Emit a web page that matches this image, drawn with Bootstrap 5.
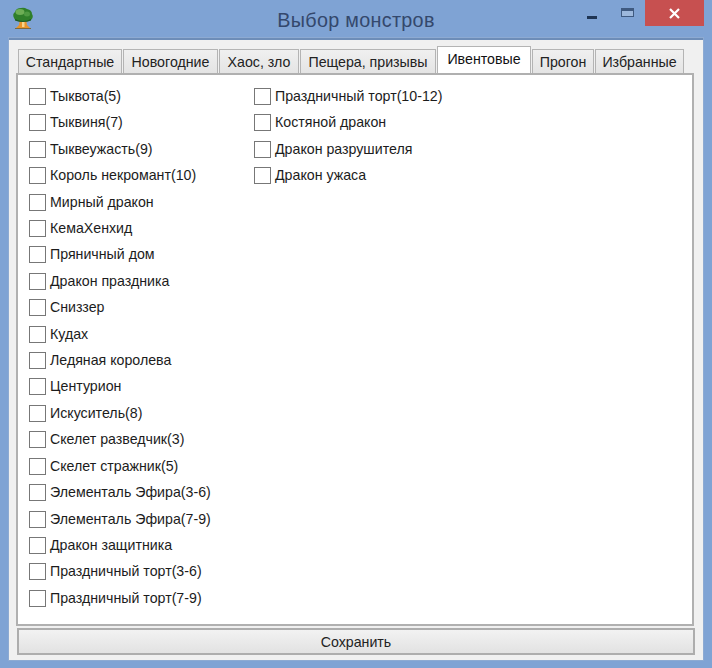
<!DOCTYPE html>
<html lang="ru"><head><meta charset="utf-8"><title>Выбор монстров</title>
<link href="https://cdn.jsdelivr.net/npm/bootstrap@5.3.0/dist/css/bootstrap.min.css" rel="stylesheet">
<style>
html,body{height:100%;}
body{background:#7fa3d4;font-family:"Liberation Sans",sans-serif;font-size:14.2px;color:#1c1c1c;overflow:hidden;}
.win{width:712px;height:668px;padding:0 9px 8px 9px;}
.titlebar{height:38px;}
.tree{margin:7px 0 0 3px;}
.wintitle{font-size:19.8px;color:#34486c;letter-spacing:.3px;left:0;right:0;top:8px;text-align:center;line-height:24px;}
.ctrl-min{width:10px;height:3px;background:#1f3554;margin:16px 24px 0 0;}
.ctrl-max{width:13px;height:9px;border:1.5px solid #3f5a80;border-top-width:3px;background:#9db8dc;margin:8px 11px 0 0;}
.ctrl-close{width:59px;height:26px;background:#c75050;color:#fff;margin-right:-1px;}
.client{height:622px;background:#f0f0f0;border-top:2px solid #6d8db8;padding:6px 0 0 7px;box-shadow:0 0 0 1px #8daad2;}
.tabbar{height:27px;padding-left:2px;gap:1px;border:0;flex-wrap:nowrap;align-items:flex-end;}
.tabbar .nav-link{height:24px;padding:0;margin:0;border:1.5px solid #b4b4b4;border-bottom:0;border-radius:0;background:linear-gradient(#f0f0f0,#e4e4e4);color:#222;font-size:14.2px;line-height:24px;text-align:center;white-space:nowrap;}
.tabbar .nav-link.active{height:27px;background:#fff;border-color:#b4b4b4;color:#111;font-weight:500;line-height:25px;margin-bottom:0;}
.panel{height:553px;width:678px;background:#fff;border:2px solid #b0b0b0;padding:13px 0 0 11px;}
.col-a{width:225px;}
.pick{height:26.42px;margin:0;gap:4px;white-space:nowrap;}
.pick .form-check-input{width:17px;height:17px;margin:0;flex:none;border:1px solid #777;border-radius:0;background-color:#fff;}
.pick span{line-height:17px;}
.savebtn{display:block;width:678px;height:27px;margin:2px 0 0 1px;padding:0;background:linear-gradient(#f2f2f2,#e2e2e2);border:2px solid #adadad;border-radius:0;color:#222;font-size:14.2px;line-height:22px;}
</style></head>
<body>
<div class="win d-flex flex-column">
 <div class="titlebar d-flex position-relative">
  <svg class="tree" width="22" height="23" viewBox="0 0 22 23"><path d="M8 12h6l1 6 3 3H4l3-3z" fill="#e8952b"/><path d="M10 13h2.500v7H10z" fill="#f7d58a"/><path d="M2 11Q0 7 3 5 4 1 9 1q3-1 6 1 5 1 5 5 2 3-1 6-3 2-6 1-3 1-6 0-4 0-5-3z" fill="#2f7f2a"/><ellipse cx="8" cy="5" rx="4.500" ry="3" fill="#6dae55"/><ellipse cx="15" cy="7" rx="3" ry="2.500" fill="#4e9a42"/><path d="M3 12q8 4 16 0v1.500q-8 3-16 0z" fill="#1e5a24"/><path d="M3 21h16v1H3z" fill="#7c6a3c"/></svg>
  <div class="wintitle position-absolute">Выбор монстров</div>
  <div class="ms-auto d-flex align-items-start">
   <div class="ctrl-min"></div>
   <div class="ctrl-max"></div>
   <div class="ctrl-close d-flex align-items-center justify-content-center"><svg width="11" height="11" viewBox="0 0 11 11"><path d="M1 1l9 9M10 1l-9 9" stroke="#fff" stroke-width="2.2"/></svg></div>
  </div>
 </div>
 <div class="client">
  <ul class="nav nav-tabs tabbar">
   <li class="nav-item"><a class="nav-link" style="width:104px" href="#">Стандартные</a></li>
   <li class="nav-item"><a class="nav-link" style="width:95px" href="#">Новогодние</a></li>
   <li class="nav-item"><a class="nav-link" style="width:80px" href="#">Хаос, зло</a></li>
   <li class="nav-item"><a class="nav-link" style="width:136px" href="#">Пещера, призывы</a></li>
   <li class="nav-item"><a class="nav-link active" style="width:94px" href="#">Ивентовые</a></li>
   <li class="nav-item"><a class="nav-link" style="width:62px" href="#">Прогон</a></li>
   <li class="nav-item"><a class="nav-link" style="width:89px" href="#">Избранные</a></li>
  </ul>
  <div class="panel d-flex">
   <div class="col-a d-flex flex-column">
    <label class="pick d-flex align-items-start"><input class="form-check-input" type="checkbox"><span>Тыквота(5)</span></label>
    <label class="pick d-flex align-items-start"><input class="form-check-input" type="checkbox"><span>Тыквиня(7)</span></label>
    <label class="pick d-flex align-items-start"><input class="form-check-input" type="checkbox"><span>Тыквеужасть(9)</span></label>
    <label class="pick d-flex align-items-start"><input class="form-check-input" type="checkbox"><span>Король некромант(10)</span></label>
    <label class="pick d-flex align-items-start"><input class="form-check-input" type="checkbox"><span>Мирный дракон</span></label>
    <label class="pick d-flex align-items-start"><input class="form-check-input" type="checkbox"><span>КемаХенхид</span></label>
    <label class="pick d-flex align-items-start"><input class="form-check-input" type="checkbox"><span>Пряничный дом</span></label>
    <label class="pick d-flex align-items-start"><input class="form-check-input" type="checkbox"><span>Дракон праздника</span></label>
    <label class="pick d-flex align-items-start"><input class="form-check-input" type="checkbox"><span>Сниззер</span></label>
    <label class="pick d-flex align-items-start"><input class="form-check-input" type="checkbox"><span>Кудах</span></label>
    <label class="pick d-flex align-items-start"><input class="form-check-input" type="checkbox"><span>Ледяная королева</span></label>
    <label class="pick d-flex align-items-start"><input class="form-check-input" type="checkbox"><span>Центурион</span></label>
    <label class="pick d-flex align-items-start"><input class="form-check-input" type="checkbox"><span>Искуситель(8)</span></label>
    <label class="pick d-flex align-items-start"><input class="form-check-input" type="checkbox"><span>Скелет разведчик(3)</span></label>
    <label class="pick d-flex align-items-start"><input class="form-check-input" type="checkbox"><span>Скелет стражник(5)</span></label>
    <label class="pick d-flex align-items-start"><input class="form-check-input" type="checkbox"><span>Элементаль Эфира(3-6)</span></label>
    <label class="pick d-flex align-items-start"><input class="form-check-input" type="checkbox"><span>Элементаль Эфира(7-9)</span></label>
    <label class="pick d-flex align-items-start"><input class="form-check-input" type="checkbox"><span>Дракон защитника</span></label>
    <label class="pick d-flex align-items-start"><input class="form-check-input" type="checkbox"><span>Праздничный торт(3-6)</span></label>
    <label class="pick d-flex align-items-start"><input class="form-check-input" type="checkbox"><span>Праздничный торт(7-9)</span></label>
   </div>
   <div class="d-flex flex-column">
    <label class="pick d-flex align-items-start"><input class="form-check-input" type="checkbox"><span>Праздничный торт(10-12)</span></label>
    <label class="pick d-flex align-items-start"><input class="form-check-input" type="checkbox"><span>Костяной дракон</span></label>
    <label class="pick d-flex align-items-start"><input class="form-check-input" type="checkbox"><span>Дракон разрушителя</span></label>
    <label class="pick d-flex align-items-start"><input class="form-check-input" type="checkbox"><span>Дракон ужаса</span></label>
   </div>
  </div>
  <button class="btn savebtn" type="button">Сохранить</button>
 </div>
</div>
</body></html>
